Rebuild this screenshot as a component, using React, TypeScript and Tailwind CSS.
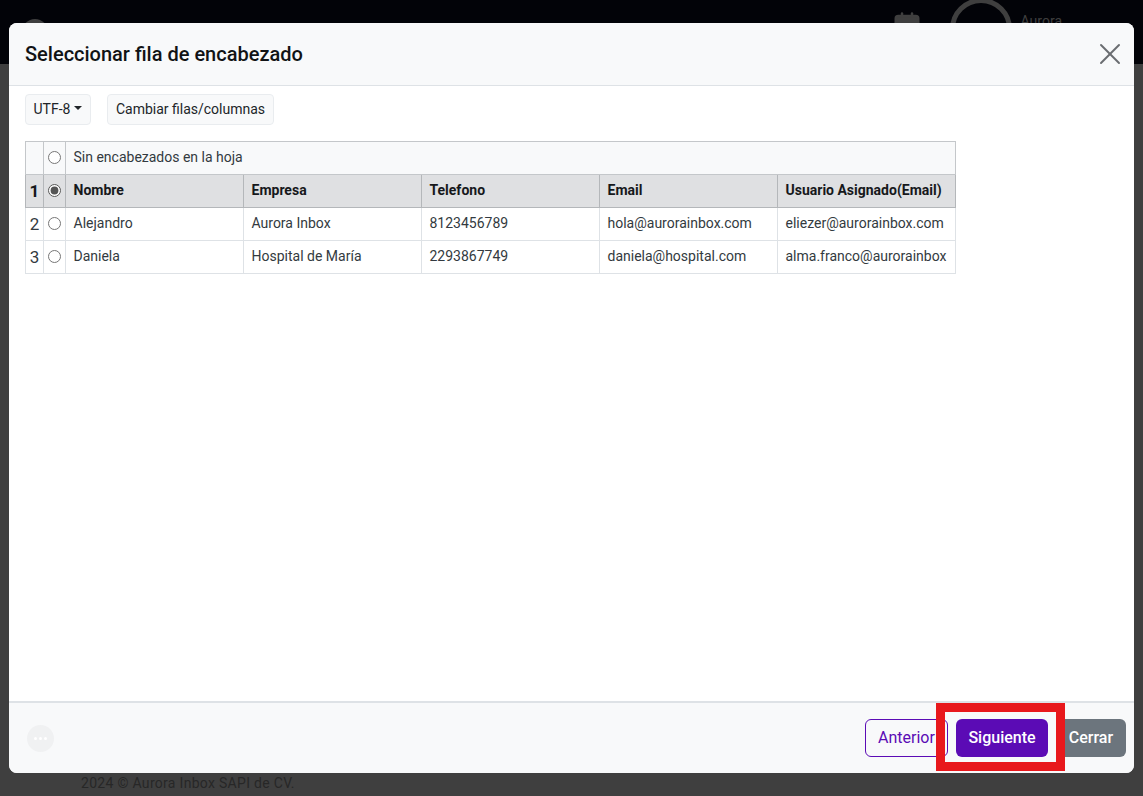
import React from 'react';
import { X, CalendarDays } from 'lucide-react';

const rows = [
  { n: 2, cells: ['Alejandro', 'Aurora Inbox', '8123456789', 'hola@aurorainbox.com', 'eliezer@aurorainbox.com'] },
  { n: 3, cells: ['Daniela', 'Hospital de María', '2293867749', 'daniela@hospital.com', 'alma.franco@aurorainbox'] },
];

const headers = ['Nombre', 'Empresa', 'Telefono', 'Email', 'Usuario Asignado(Email)'];

const HeaderTable = () => (
  <table className="mt-4 w-[930px] table-fixed border-collapse text-sm text-[#333a40]">
    <colgroup>
      <col className="w-[18px]" />
      <col className="w-[22px]" />
      <col className="w-[178px]" />
      <col className="w-[178px]" />
      <col className="w-[178px]" />
      <col className="w-[178px]" />
      <col className="w-[178px]" />
    </colgroup>
    <tbody>
      <tr className="h-[33px] bg-[#f8f9fa]">
        <td className="border border-[#c4c7ca]"></td>
        <td className="border border-[#c4c7ca] pb-[3px] text-center leading-none">
          <input type="radio" name="header-row" className="m-0 align-middle accent-[#555555]" />
        </td>
        <td colSpan={5} className="border border-[#c4c7ca] pr-2 pb-[2px] pl-[7.5px]">Sin encabezados en la hoja</td>
      </tr>
      <tr className="h-[33px] bg-[#dfe0e2] font-bold text-[#16181b]">
        <td className="border border-[#b4b7ba] text-center text-[17px]">1</td>
        <td className="border border-[#b4b7ba] pb-[3px] text-center leading-none">
          <input type="radio" name="header-row" defaultChecked className="m-0 align-middle accent-[#555555]" />
        </td>
        {headers.map((h) => (
          <td key={h} className="overflow-hidden border border-[#b4b7ba] pr-2 pb-[2px] pl-[7.5px] whitespace-nowrap">{h}</td>
        ))}
      </tr>
      {rows.map((row) => (
        <tr key={row.n} className="h-[33px] bg-white">
          <td className="border border-[#dee2e6] text-center text-[17px]">{row.n}</td>
          <td className="border border-[#dee2e6] pb-[3px] text-center leading-none">
            <input type="radio" name="header-row" className="m-0 align-middle accent-[#555555]" />
          </td>
          {row.cells.map((c) => (
            <td key={c} className="overflow-hidden border border-[#dee2e6] pr-2 pb-[2px] pl-[7.5px] whitespace-nowrap">{c}</td>
          ))}
        </tr>
      ))}
    </tbody>
  </table>
);

const Modal = () => (
  <div className="absolute top-[23px] left-[9px] flex h-[750px] w-[1125px] flex-col overflow-hidden rounded-lg bg-white">
    <div className="flex h-[63px] items-center justify-between border-b border-[#dee2e6] bg-[#f8f9fa] pr-[6px] pl-4">
      <h5 className="text-xl font-medium text-[#111315]">Seleccionar fila de encabezado</h5>
      <X size={36} strokeWidth={1.3} className="text-[#6a6d70]" />
    </div>

    <div className="flex-1 px-4 pt-2">
      <div className="flex gap-4">
        <button className="flex h-[31px] w-[66px] items-center justify-center gap-1 rounded border border-[#e9ecef] bg-[#f8f9fa] pb-[2px] text-sm text-[#212529]">
          UTF-8
          <span className="mb-0.5 h-0 w-0 border-x-[4px] border-t-[4px] border-x-transparent border-t-[#212529]"></span>
        </button>
        <button className="h-[31px] w-[167px] rounded border border-[#e9ecef] bg-[#f8f9fa] pb-[2px] text-sm text-[#212529]">
          Cambiar filas/columnas
        </button>
      </div>
      <HeaderTable />
    </div>

    <div className="flex h-[72px] items-center justify-between border-t-2 border-[#dee2e6] bg-[#f8f9fa] pr-2 pl-[18px]">
      <div className="flex h-[27px] w-[27px] items-center justify-center gap-[2px] rounded-full bg-[#f0f1f2]">
        <span className="h-[3px] w-[3px] rounded-full bg-white"></span>
        <span className="h-[3px] w-[3px] rounded-full bg-white"></span>
        <span className="h-[3px] w-[3px] rounded-full bg-white"></span>
      </div>
      <div className="flex gap-2">
        <button className="h-[38px] w-[83px] rounded-md border border-[#5b0bb5] text-base text-[#5b0bb5]">Anterior</button>
        <button className="h-[38px] w-[92px] rounded-md bg-[#5b0bb5] text-base font-medium text-white">Siguiente</button>
        <button className="h-[38px] w-[70px] rounded-md bg-[#6c757d] text-base font-medium text-white">Cerrar</button>
      </div>
    </div>
  </div>
);

export default function App() {
  return (
    <div className="relative flex h-[796px] w-[1143px] flex-col overflow-hidden bg-[#3f3f3f] font-['Roboto',sans-serif]">
      <div className="flex h-16 items-center justify-between overflow-hidden bg-[#020308] pr-[81px] pl-[22px]">
        <div className="h-[26px] w-[26px] rounded-full bg-[#3f3f3f]"></div>
        <div className="flex items-start">
          <CalendarDays size={30} className="mt-[7px] mr-7 text-[#3f3f3f]" fill="#3f3f3f" />
          <div className="-mt-[6px] h-[62px] w-[62px] rounded-full border-[5px] border-[#3f3f3f]"></div>
          <span className="mt-[7px] ml-[9px] text-sm text-[#3f3f3f]">Aurora</span>
        </div>
      </div>
      <div className="flex-1"></div>
      <div className="pb-[3px] pl-[81px] text-sm tracking-[0.3px] text-[#272727]">2024 © Aurora Inbox SAPI de CV.</div>

      <Modal />

      {/* annotation drawn over the screenshot */}
      <div className="absolute top-[703px] left-[936px] h-[68px] w-[129px] border-[9px] border-[#e8181c]"></div>
    </div>
  );
}
